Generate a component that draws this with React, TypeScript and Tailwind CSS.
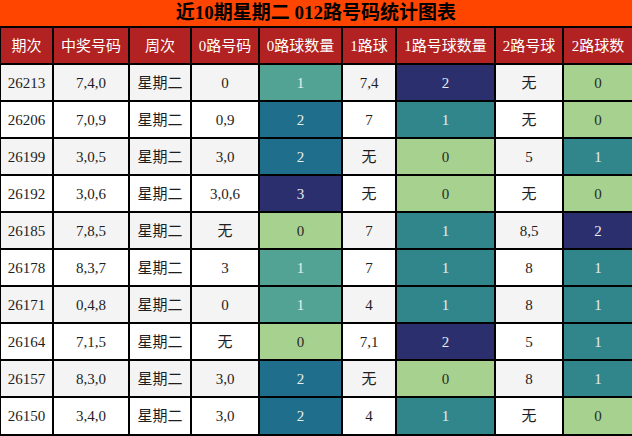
import React from 'react';

type Row = [string, string, string, string, number, string, number, string, number];

const rows: Row[] = [
  ['26213', '7,4,0', '星期二', '0', 1, '7,4', 2, '无', 0],
  ['26206', '7,0,9', '星期二', '0,9', 2, '7', 1, '无', 0],
  ['26199', '3,0,5', '星期二', '3,0', 2, '无', 0, '5', 1],
  ['26192', '3,0,6', '星期二', '3,0,6', 3, '无', 0, '无', 0],
  ['26185', '7,8,5', '星期二', '无', 0, '7', 1, '8,5', 2],
  ['26178', '8,3,7', '星期二', '3', 1, '7', 1, '8', 1],
  ['26171', '0,4,8', '星期二', '0', 1, '4', 1, '8', 1],
  ['26164', '7,1,5', '星期二', '无', 0, '7,1', 2, '5', 1],
  ['26157', '8,3,0', '星期二', '3,0', 2, '无', 0, '8', 1],
  ['26150', '3,4,0', '星期二', '3,0', 2, '4', 1, '无', 0],
];

const headers = ['期次', '中奖号码', '周次', '0路号码', '0路球数量', '1路球', '1路号球数量', '2路号球', '2路球数'];

// colour scale for the 0路 column (max 3)
const zeroScale: Record<number, string> = {
  0: 'bg-[#a6d18f] text-[#2a2a2a]',
  1: 'bg-[#53a394] text-[#e6eeee]',
  2: 'bg-[#1f6e8b] text-[#e6eeee]',
  3: 'bg-[#2c2f6e] text-[#e6eeee]',
};

// colour scale for the 1路 / 2路 columns (max 2)
const otherScale: Record<number, string> = {
  0: 'bg-[#a6d18f] text-[#2a2a2a]',
  1: 'bg-[#30868b] text-[#e6eeee]',
  2: 'bg-[#2c2f6e] text-[#e6eeee]',
};

const Cell = ({ children, className }: { children: React.ReactNode; className: string }) => (
  <div className={`flex items-center justify-center pt-[1px] ${className}`}>{children}</div>
);

export default function App() {
  return (
    <div
      className="w-[632px] h-[436px] bg-black pl-[1px] grid grid-cols-[51px_74px_60px_66px_81px_52px_97px_66px_68px] grid-rows-[26px_35px_repeat(9,35px)_36px] gap-[2px] text-[15px]"
      style={{ fontFamily: '"Liberation Serif", "Noto Sans CJK SC", serif' }}
    >
      {/* Title */}
      <div className="col-span-9 -ml-[1px] bg-[#ff4500] flex items-center justify-center pt-[1px] text-[19px] font-bold text-black">
        近10期星期二 012路号码统计图表
      </div>

      {/* Header */}
      {headers.map((h) => (
        <Cell key={h} className="bg-[#b22222] text-white">
          {h}
        </Cell>
      ))}

      {/* Rows */}
      {rows.map((r, i) => {
        const plain = i % 2 === 0 ? 'bg-[#f4f4f4] text-[#1e1e1e]' : 'bg-white text-[#1e1e1e]';
        return (
          <React.Fragment key={r[0]}>
            <Cell className={plain}>{r[0]}</Cell>
            <Cell className={plain}>{r[1]}</Cell>
            <Cell className={plain}>{r[2]}</Cell>
            <Cell className={plain}>{r[3]}</Cell>
            <Cell className={zeroScale[r[4]]}>{r[4]}</Cell>
            <Cell className={plain}>{r[5]}</Cell>
            <Cell className={otherScale[r[6]]}>{r[6]}</Cell>
            <Cell className={plain}>{r[7]}</Cell>
            <Cell className={otherScale[r[8]]}>{r[8]}</Cell>
          </React.Fragment>
        );
      })}
    </div>
  );
}
